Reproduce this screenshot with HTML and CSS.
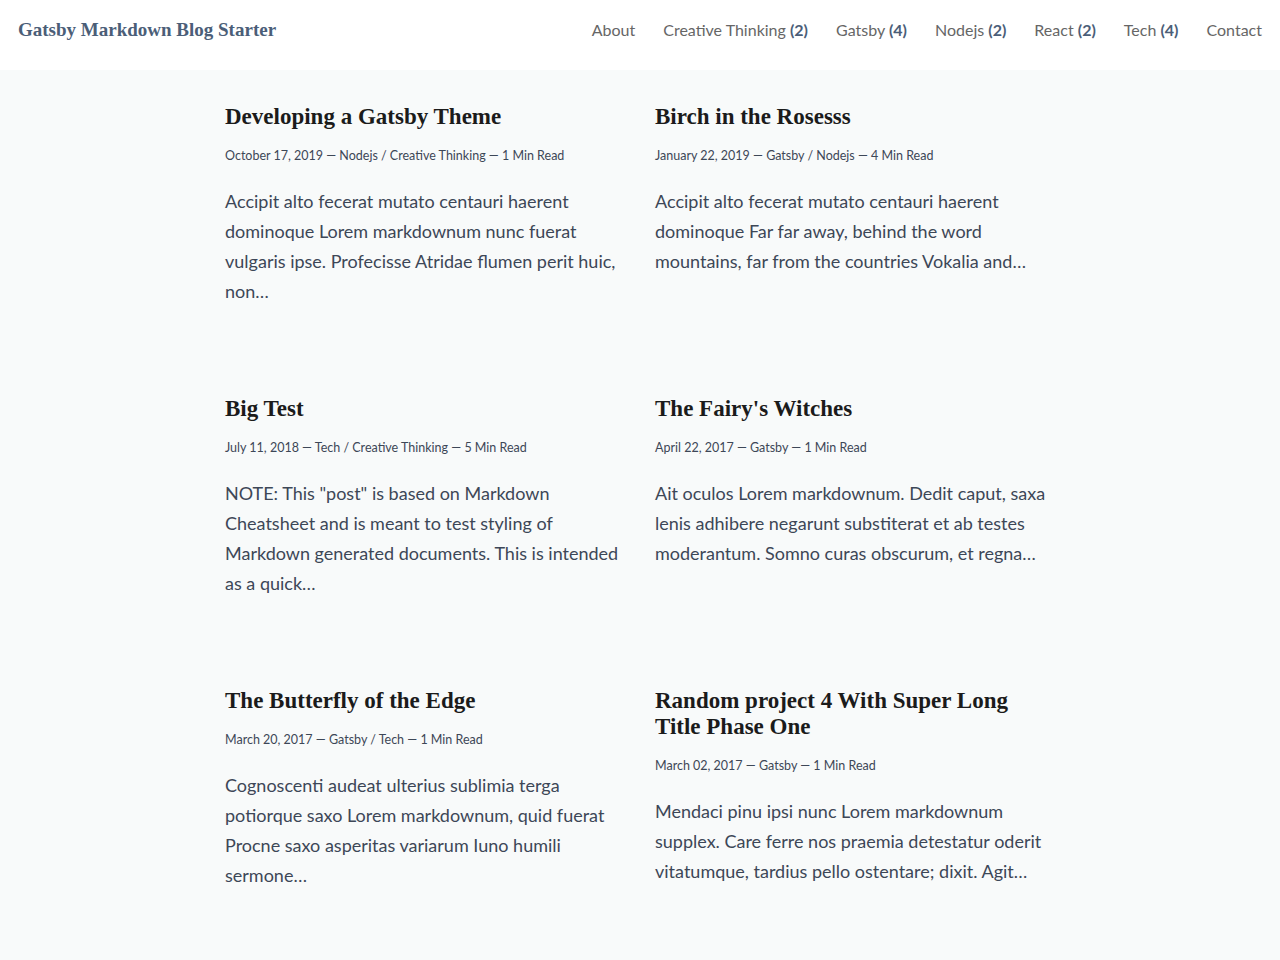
FILE: index.html
```html
<!DOCTYPE html>
<html lang="en">
  <head>
    <meta charset="UTF-8" />
    <meta name="viewport" content="width=device-width, initial-scale=1.0" />
    <title>Gatsby Markdown Blog Starter</title>
    <link rel="stylesheet" href="styles.css">
  </head>

  <body>
    <header class="site-header">
      <a class="brand" href="#">Gatsby Markdown Blog Starter</a>
      <nav class="nav">
        <a href="#">About</a>
        <a href="#">Creative Thinking <b>(2)</b></a>
        <a href="#">Gatsby <b>(4)</b></a>
        <a href="#">Nodejs <b>(2)</b></a>
        <a href="#">React <b>(2)</b></a>
        <a href="#">Tech <b>(4)</b></a>
        <a href="#">Contact</a>
      </nav>
    </header>

    <main class="posts">
      <article class="post">
        <h2 class="post-title">Developing a Gatsby Theme</h2>
        <p class="post-meta">October 17, 2019 — Nodejs / Creative Thinking — 1 Min Read</p>
        <p class="post-excerpt">Accipit alto fecerat mutato centauri haerent dominoque Lorem markdownum nunc fuerat vulgaris ipse. Profecisse Atridae flumen perit huic, non…</p>
      </article>
      <article class="post">
        <h2 class="post-title">Birch in the Rosesss</h2>
        <p class="post-meta">January 22, 2019 — Gatsby / Nodejs — 4 Min Read</p>
        <p class="post-excerpt">Accipit alto fecerat mutato centauri haerent dominoque Far far away, behind the word mountains, far from the countries Vokalia and…</p>
      </article>
      <article class="post">
        <h2 class="post-title">Big Test</h2>
        <p class="post-meta">July 11, 2018 — Tech / Creative Thinking — 5 Min Read</p>
        <p class="post-excerpt">NOTE: This "post" is based on Markdown Cheatsheet and is meant to test styling of Markdown generated documents. This is intended as a quick…</p>
      </article>
      <article class="post">
        <h2 class="post-title">The Fairy's Witches</h2>
        <p class="post-meta">April 22, 2017 — Gatsby — 1 Min Read</p>
        <p class="post-excerpt">Ait oculos Lorem markdownum. Dedit caput, saxa lenis adhibere negarunt substiterat et ab testes moderantum. Somno curas obscurum, et regna…</p>
      </article>
      <article class="post">
        <h2 class="post-title">The Butterfly of the Edge</h2>
        <p class="post-meta">March 20, 2017 — Gatsby / Tech — 1 Min Read</p>
        <p class="post-excerpt">Cognoscenti audeat ulterius sublimia terga potiorque saxo Lorem markdownum, quid fuerat Procne saxo asperitas variarum Iuno humili sermone…</p>
      </article>
      <article class="post">
        <h2 class="post-title">Random project 4 With Super Long Title Phase One</h2>
        <p class="post-meta">March 02, 2017 — Gatsby — 1 Min Read</p>
        <p class="post-excerpt">Mendaci pinu ipsi nunc Lorem markdownum supplex. Care ferre nos praemia detestatur oderit vitatumque, tardius pello ostentare; dixit. Agit…</p>
      </article>
    </main>
  </body>
</html>
```

FILE: styles.css
```css
* { box-sizing: border-box; }
body { margin: 0; background-color: #f8fafa; font-family: Lato, "Noto Sans", sans-serif; color: #3d4757; }
a { text-decoration: none; color: inherit; }

.site-header { display: flex; justify-content: space-between; align-items: center; height: 70px; padding: 0 18px 10px; background-color: #fff; }
.brand { font-family: "Liberation Serif", serif; font-weight: bold; font-size: 19px; line-height: 24px; color: #4b5e78; }
.nav { display: flex; gap: 28px; font-size: 16px; line-height: 22px; color: #666; }
.nav b { color: #4b5e78; }

.posts { display: grid; grid-template-columns: 400px 400px; column-gap: 30px; row-gap: 90px; justify-content: center; padding: 34px 0 60px; }
.post-title { margin: 0; font-family: "Liberation Serif", serif; font-weight: bold; font-size: 23px; line-height: 26px; color: #1b1b1b; }
.post-meta { margin: 16px 0 0; font-size: 12.5px; line-height: 20px; color: #3d4757; }
.post-excerpt { margin: 20px 0 0; font-size: 18px; line-height: 30px; }
```
